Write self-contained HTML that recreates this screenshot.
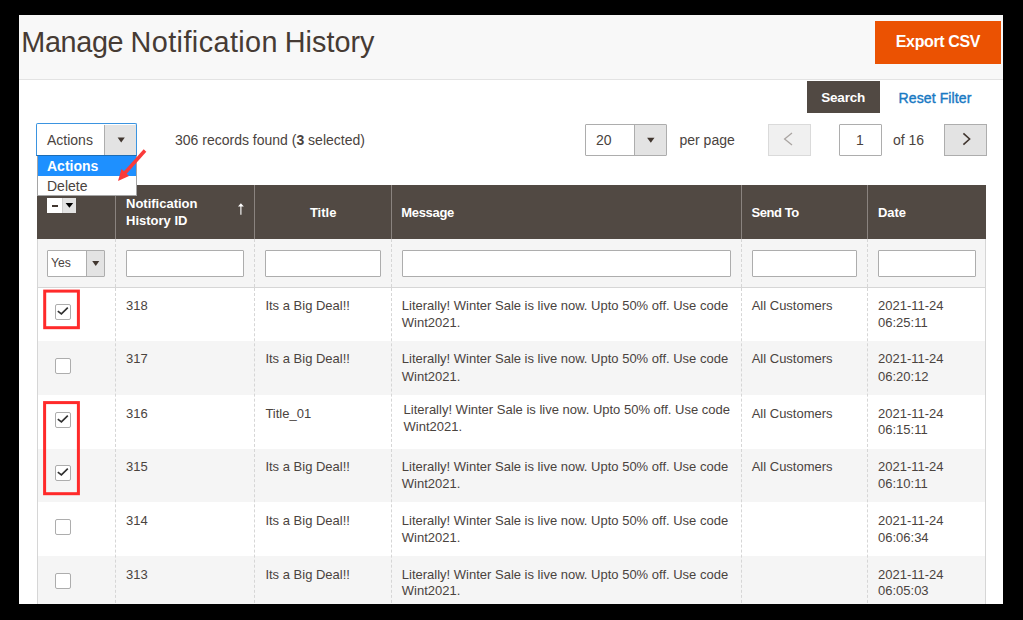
<!DOCTYPE html>
<html><head><meta charset="utf-8"><style>
html,body{margin:0;padding:0}
body{background:#000;width:1023px;height:620px;overflow:hidden;position:relative;font-family:"Liberation Sans",sans-serif;color:#4a433e}
#clip{position:absolute;left:0;top:0;width:1003px;height:604px;overflow:hidden}
.a{position:absolute;box-sizing:border-box}
.t{position:absolute;white-space:nowrap;line-height:1}
.win{left:19px;top:15px;width:984px;height:589px;background:#fff}
.hdr{left:19px;top:15px;width:984px;height:65px;background:#f8f8f8;border-bottom:1px solid #e3e3e3}
.tri{position:absolute;width:0;height:0;border-left:3.6px solid transparent;border-right:3.6px solid transparent;border-top:4.9px solid #41362f}
.inp{border:1px solid #adadad;background:#fff;border-radius:1px}
.cb{width:15.6px;height:15.6px;border:1.3px solid #adadad;background:#fff;border-radius:2px}
.red{border:2.5px solid #ff2b2b}
.vd{width:0;border-left:1px dashed #d6d6d6}
.vh{width:1px;background:#8a837f}
.th{color:#fff;font-weight:bold}
</style></head><body>
<div id="clip">
<div class="a win"></div>
<div class="a hdr"></div>
<div class="t" style="left:21.3px;top:28.22px;font-size:28.8px;color:#463b34;letter-spacing:-0.35px">Manage</div>
<div class="t" style="left:130.5px;top:28.22px;font-size:28.8px;color:#463b34;letter-spacing:0.42px">Notification</div>
<div class="t" style="left:284.8px;top:28.22px;font-size:28.8px;color:#463b34">History</div>
<div class="a" style="left:875px;top:21px;width:126px;height:43px;background:#eb5202"></div>
<div class="t" style="left:895.8px;top:33.86px;font-size:16px;font-weight:bold;color:#fff;letter-spacing:-0.37px">Export CSV</div>
<div class="a" style="left:807px;top:81px;width:73px;height:32px;background:#514943"></div>
<div class="t" style="left:821.3px;top:91.17px;font-size:13.5px;font-weight:bold;color:#fff;letter-spacing:-0.22px">Search</div>
<div class="t" style="left:898.5px;top:90.55px;font-size:14px;color:#1979c3;letter-spacing:0.12px;-webkit-text-stroke:0.4px #1979c3">Reset Filter</div>
<div class="a" style="left:36.3px;top:123.4px;width:100.9px;height:32.6px;border:1.4px solid #3b94e0;border-bottom-color:#1d6db5;border-radius:2px 2px 0 0;background:#fff"></div>
<div class="a" style="left:104px;top:125px;width:32px;height:30px;background:#e3e3e3;border-left:1px solid #adadad"></div>
<svg class="a" width="1003" height="604" style="left:0;top:0"><path d="M117.6 137.6 L124.8 137.6 L121.20 142.5 Z" fill="#41362f"/></svg>
<div class="t" style="left:47.0px;top:133.15px;font-size:14px;">Actions</div>
<div class="t" style="left:175.0px;top:133.05px;font-size:14px;">306 records found (<b>3</b> selected)</div>
<div class="a inp" style="left:585px;top:124px;width:82px;height:32px"></div>
<div class="a" style="left:634px;top:125px;width:32px;height:30px;background:#e3e3e3;border-left:1px solid #adadad"></div>
<svg class="a" width="1003" height="604" style="left:0;top:0"><path d="M647.1 137.8 L654.5 137.8 L650.80 142.8 Z" fill="#41362f"/></svg>
<div class="t" style="left:596.0px;top:133.35px;font-size:14px;">20</div>
<div class="t" style="left:679.5px;top:133.15px;font-size:14px;">per page</div>
<div class="a" style="left:768px;top:124px;width:43px;height:32px;background:#f0f0f0;border:1px solid #dadada"></div>
<svg class="a" width="20" height="20" style="left:778px;top:129px"><path d="M14 4 L6.6 10 L14 16" fill="none" stroke="#aaa5a2" stroke-width="1.3"/></svg>
<div class="a inp" style="left:839px;top:124px;width:43px;height:32px"></div>
<div class="t" style="left:856.0px;top:133.15px;font-size:14px;">1</div>
<div class="t" style="left:893.0px;top:133.15px;font-size:14px;">of 16</div>
<div class="a" style="left:944px;top:124px;width:43px;height:32px;background:#e3e3e3;border:1px solid #adadad"></div>
<svg class="a" width="20" height="20" style="left:956px;top:129px"><path d="M7.4 4.3 L13.6 10 L7.4 15.7" fill="none" stroke="#41362f" stroke-width="1.6"/></svg>
<div class="a" style="left:37px;top:185px;width:949px;height:54px;background:#514943"></div>
<div class="a" style="left:37px;top:239px;width:949px;height:48px;background:#f5f5f5"></div>
<div class="a" style="left:37px;top:287px;width:949px;height:1px;background:#d6d6d6"></div>
<div class="a" style="left:37px;top:341px;width:949px;height:54px;background:#f5f5f5"></div>
<div class="a" style="left:37px;top:449px;width:949px;height:53px;background:#f5f5f5"></div>
<div class="a" style="left:37px;top:556px;width:949px;height:54px;background:#f5f5f5"></div>
<div class="a" style="left:37px;top:239px;width:1px;height:380px;background:#d6d6d6"></div>
<div class="a" style="left:985px;top:239px;width:1px;height:380px;background:#d6d6d6"></div>
<div class="a vh" style="left:115px;top:185px;height:54px"></div>
<div class="a vd" style="left:115px;top:239px;height:48px"></div>
<div class="a vd" style="left:115px;top:288px;height:330px"></div>
<div class="a vh" style="left:254px;top:185px;height:54px"></div>
<div class="a vd" style="left:254px;top:239px;height:48px"></div>
<div class="a vd" style="left:254px;top:288px;height:330px"></div>
<div class="a vh" style="left:391px;top:185px;height:54px"></div>
<div class="a vd" style="left:391px;top:239px;height:48px"></div>
<div class="a vd" style="left:391px;top:288px;height:330px"></div>
<div class="a vh" style="left:741px;top:185px;height:54px"></div>
<div class="a vd" style="left:741px;top:239px;height:48px"></div>
<div class="a vd" style="left:741px;top:288px;height:330px"></div>
<div class="a vh" style="left:867px;top:185px;height:54px"></div>
<div class="a vd" style="left:867px;top:239px;height:48px"></div>
<div class="a vd" style="left:867px;top:288px;height:330px"></div>
<div class="t" style="left:126.0px;top:197.00px;font-size:13px;color:#fff;font-weight:bold">Notification</div>
<div class="t" style="left:126.0px;top:213.70px;font-size:13px;color:#fff;font-weight:bold">History ID</div>
<svg class="a" width="10" height="16" style="left:235.9px;top:202px"><path d="M4.9 3 V12.8" stroke="#fff" stroke-width="1.1"/><path d="M2 4.6 L4.9 1.2 L7.8 4.6 Z" fill="#fff"/></svg>
<div class="t" style="left:309.9px;top:205.80px;font-size:13px;color:#fff;font-weight:bold">Title</div>
<div class="t" style="left:401.2px;top:205.80px;font-size:13px;color:#fff;font-weight:bold;letter-spacing:-0.3px">Message</div>
<div class="t" style="left:751.6px;top:205.80px;font-size:13px;color:#fff;font-weight:bold;letter-spacing:-0.45px">Send To</div>
<div class="t" style="left:877.9px;top:205.80px;font-size:13px;color:#fff;font-weight:bold">Date</div>
<div class="a" style="left:47px;top:198px;width:15px;height:15px;background:#fff"></div>
<div class="a" style="left:62px;top:198px;width:14px;height:15px;background:#e3e3e3;border-left:1px solid #cfcfcf"></div>
<div class="a" style="left:52.2px;top:204.5px;width:5.6px;height:2px;background:#41362f"></div>
<svg class="a" width="1003" height="604" style="left:0;top:0"><path d="M65.6 203.1 L73.2 203.1 L69.40 207.8 Z" fill="#000"/></svg>
<div class="a inp" style="left:47px;top:250px;width:58px;height:27px"></div>
<div class="a" style="left:86px;top:251px;width:18px;height:25px;background:#e3e3e3;border-left:1px solid #adadad"></div>
<svg class="a" width="1003" height="604" style="left:0;top:0"><path d="M92.2 261 L99.3 261 L95.75 266 Z" fill="#41362f"/></svg>
<div class="t" style="left:51.0px;top:256.87px;font-size:12.2px;">Yes</div>
<div class="a inp" style="left:126px;top:250px;width:118px;height:27px"></div>
<div class="a inp" style="left:265px;top:250px;width:116px;height:27px"></div>
<div class="a inp" style="left:401.5px;top:250px;width:329.5px;height:27px"></div>
<div class="a inp" style="left:752px;top:250px;width:105px;height:27px"></div>
<div class="a inp" style="left:878px;top:250px;width:97.5px;height:27px"></div>
<div class="a cb" style="left:55px;top:304px"></div>
<svg class="a" width="16" height="16" viewBox="0 0 16 16" style="left:55px;top:304px"><path d="M2.8 7.1 L6.4 9.9 L12.8 3.6" fill="none" stroke="#303030" stroke-width="1.6"/></svg>
<div class="t" style="left:126.0px;top:299.00px;font-size:13px;">318</div>
<div class="t" style="left:265.4px;top:299.00px;font-size:13px;">Its a Big Deal!!</div>
<div class="t" style="left:401.8px;top:299.00px;font-size:13px;">Literally! Winter Sale is live now. Upto 50% off. Use code</div>
<div class="t" style="left:401.8px;top:316.00px;font-size:13px;">Wint2021.</div>
<div class="t" style="left:751.7px;top:299.00px;font-size:13px;">All Customers</div>
<div class="t" style="left:878.0px;top:299.00px;font-size:13px;">2021-11-24</div>
<div class="t" style="left:878.0px;top:316.00px;font-size:13px;">06:25:11</div>
<div class="a cb" style="left:55px;top:358px"></div>
<div class="t" style="left:126.0px;top:352.00px;font-size:13px;">317</div>
<div class="t" style="left:265.4px;top:352.00px;font-size:13px;">Its a Big Deal!!</div>
<div class="t" style="left:401.8px;top:352.00px;font-size:13px;">Literally! Winter Sale is live now. Upto 50% off. Use code</div>
<div class="t" style="left:401.8px;top:370.00px;font-size:13px;">Wint2021.</div>
<div class="t" style="left:751.7px;top:352.00px;font-size:13px;">All Customers</div>
<div class="t" style="left:878.0px;top:352.00px;font-size:13px;">2021-11-24</div>
<div class="t" style="left:878.0px;top:370.00px;font-size:13px;">06:20:12</div>
<div class="a cb" style="left:55px;top:412px"></div>
<svg class="a" width="16" height="16" viewBox="0 0 16 16" style="left:55px;top:412px"><path d="M2.8 7.1 L6.4 9.9 L12.8 3.6" fill="none" stroke="#303030" stroke-width="1.6"/></svg>
<div class="t" style="left:126.0px;top:407.00px;font-size:13px;">316</div>
<div class="t" style="left:265.4px;top:407.00px;font-size:13px;">Title_01</div>
<div class="t" style="left:403.6px;top:403.00px;font-size:13px;">Literally! Winter Sale is live now. Upto 50% off. Use code</div>
<div class="t" style="left:403.6px;top:420.00px;font-size:13px;">Wint2021.</div>
<div class="t" style="left:751.7px;top:407.00px;font-size:13px;">All Customers</div>
<div class="t" style="left:878.0px;top:407.00px;font-size:13px;">2021-11-24</div>
<div class="t" style="left:878.0px;top:423.00px;font-size:13px;">06:15:11</div>
<div class="a cb" style="left:55px;top:465px"></div>
<svg class="a" width="16" height="16" viewBox="0 0 16 16" style="left:55px;top:465px"><path d="M2.8 7.1 L6.4 9.9 L12.8 3.6" fill="none" stroke="#303030" stroke-width="1.6"/></svg>
<div class="t" style="left:126.0px;top:460.00px;font-size:13px;">315</div>
<div class="t" style="left:265.4px;top:460.00px;font-size:13px;">Its a Big Deal!!</div>
<div class="t" style="left:401.8px;top:460.00px;font-size:13px;">Literally! Winter Sale is live now. Upto 50% off. Use code</div>
<div class="t" style="left:401.8px;top:477.00px;font-size:13px;">Wint2021.</div>
<div class="t" style="left:751.7px;top:460.00px;font-size:13px;">All Customers</div>
<div class="t" style="left:878.0px;top:460.00px;font-size:13px;">2021-11-24</div>
<div class="t" style="left:878.0px;top:477.00px;font-size:13px;">06:10:11</div>
<div class="a cb" style="left:55px;top:519px"></div>
<div class="t" style="left:126.0px;top:514.00px;font-size:13px;">314</div>
<div class="t" style="left:265.4px;top:514.00px;font-size:13px;">Its a Big Deal!!</div>
<div class="t" style="left:401.8px;top:514.00px;font-size:13px;">Literally! Winter Sale is live now. Upto 50% off. Use code</div>
<div class="t" style="left:401.8px;top:531.00px;font-size:13px;">Wint2021.</div>
<div class="t" style="left:878.0px;top:514.00px;font-size:13px;">2021-11-24</div>
<div class="t" style="left:878.0px;top:531.00px;font-size:13px;">06:06:34</div>
<div class="a cb" style="left:55px;top:573px"></div>
<div class="t" style="left:126.0px;top:568.00px;font-size:13px;">313</div>
<div class="t" style="left:265.4px;top:568.00px;font-size:13px;">Its a Big Deal!!</div>
<div class="t" style="left:401.8px;top:568.00px;font-size:13px;">Literally! Winter Sale is live now. Upto 50% off. Use code</div>
<div class="t" style="left:401.8px;top:584.00px;font-size:13px;">Wint2021.</div>
<div class="t" style="left:878.0px;top:568.00px;font-size:13px;">2021-11-24</div>
<div class="t" style="left:878.0px;top:584.00px;font-size:13px;">06:05:03</div>
<svg class="a" width="1003" height="604" style="left:0;top:0"><rect x="44.7" y="291.1" width="33.7" height="36.6" fill="none" stroke="#ff2a2a" stroke-width="3"/><rect x="44.6" y="402.6" width="33.8" height="91.1" fill="none" stroke="#ff2a2a" stroke-width="3"/></svg>
<div class="a" style="left:37px;top:156px;width:100px;height:40px;background:#fff;border:1px solid #a5a5a5;border-top:0"></div>
<div class="a" style="left:38px;top:156px;width:98px;height:20px;background:#1e90ff"></div>
<div class="t" style="left:47.0px;top:159.15px;font-size:14px;font-weight:bold;color:#fff">Actions</div>
<div class="t" style="left:47.0px;top:178.55px;font-size:14px;">Delete</div>
<svg class="a" width="40" height="45" style="left:110px;top:143px"><path d="M35 7.5 L14 31" stroke="#fa3a3a" stroke-width="3.5" stroke-linecap="butt"/><path d="M8 38 L11.5 26 L19 33 Z" fill="#fa3a3a"/></svg>
</div>
</body></html>
